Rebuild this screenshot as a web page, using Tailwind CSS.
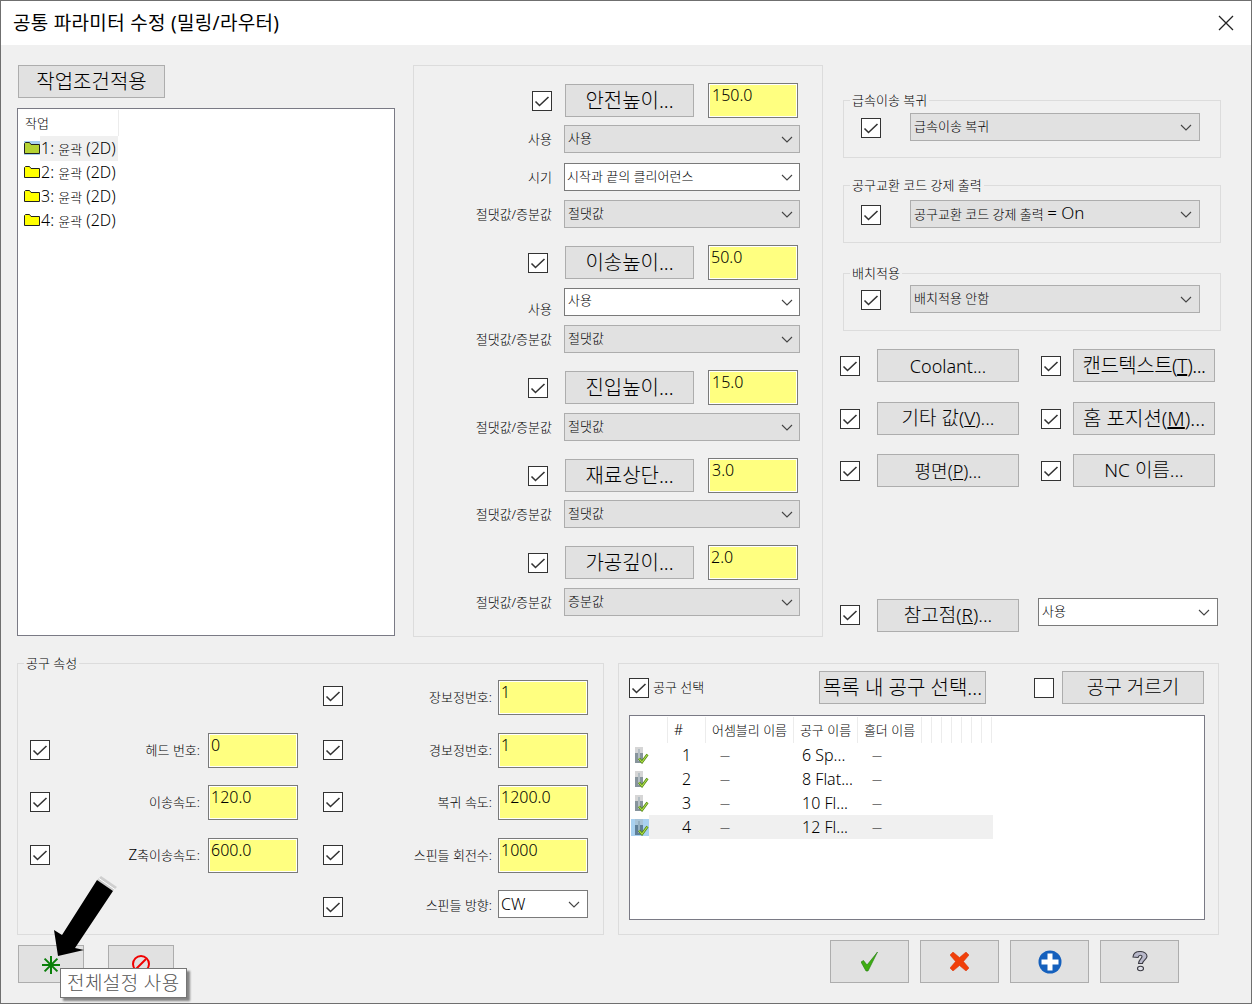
<!DOCTYPE html>
<html lang="ko">
<head>
    <meta charset="UTF-8">
    <title>공통 파라미터 수정</title>
    <script src="https://cdn.jsdelivr.net/npm/@tailwindcss/browser@4"></script>
</head>
<body class="bg-[#f0f0f0]">
<div class="relative w-[1252px] h-[1004px] overflow-hidden border border-[#6f6f6f] bg-[#f0f0f0] text-black font-light font-['Noto_Sans','Noto_Sans_CJK_KR',sans-serif]">

    <!-- Title bar -->
    <div class="flex items-center justify-between h-[44px] bg-white pl-[12px] pr-[17px]">
        <span class="text-[19px] tracking-[0.3px] font-normal">공통 파라미터 수정 (밀링/라우터)</span>
        <svg class="w-[16px] h-[16px]" viewBox="0 0 16 16" fill="none" stroke="#222" stroke-width="1.3"><path d="M1 1l14 14M15 1L1 15"/></svg>
    </div>

    <!-- Top area -->
    <div class="flex mt-[20px] h-[572px]">
        <!-- Left column -->
        <div class="ml-[16px] w-[378px]">
            <button class="ml-[1px] w-[147px] h-[33px] bg-[#e1e1e1] border border-[#adadad] text-[20px] leading-none">작업조건적용</button>
            <div class="mt-[10px] h-[528px] bg-white border border-[#7a7a85] pl-[1px] pt-[1px]">
                <div class="w-[100px] h-[26px] border-r border-[#ececec] pl-[6px] text-[13px] leading-[27px]">작업</div>
                <div class="flex items-center h-[24px] pl-[5px]">
                    <svg class="w-[16px] h-[14px] bg-[#a9d1f0]" viewBox="0 0 16 14"><path d="M.5 12.500v-10l1-1h4l1.500 2h8.500v9z" fill="#b5d334" stroke="#222"/></svg>
                    <span class="bg-[#f0f0f0] pl-[1px] text-[16px] leading-[24px] w-[78px]">1: <span class="text-[13px]">윤곽</span> (2D)</span>
                </div>
                <div class="flex items-center h-[24px] pl-[5px]">
                    <svg class="w-[16px] h-[14px]" viewBox="0 0 16 14"><path d="M.5 12.500v-10l1-1h4l1.500 2h8.500v9z" fill="#ffff00" stroke="#222"/></svg>
                    <span class="pl-[1px] text-[16px] leading-[24px]">2: <span class="text-[13px]">윤곽</span> (2D)</span>
                </div>
                <div class="flex items-center h-[24px] pl-[5px]">
                    <svg class="w-[16px] h-[14px]" viewBox="0 0 16 14"><path d="M.5 12.500v-10l1-1h4l1.500 2h8.500v9z" fill="#ffff00" stroke="#222"/></svg>
                    <span class="pl-[1px] text-[16px] leading-[24px]">3: <span class="text-[13px]">윤곽</span> (2D)</span>
                </div>
                <div class="flex items-center h-[24px] pl-[5px]">
                    <svg class="w-[16px] h-[14px]" viewBox="0 0 16 14"><path d="M.5 12.500v-10l1-1h4l1.500 2h8.500v9z" fill="#ffff00" stroke="#222"/></svg>
                    <span class="pl-[1px] text-[16px] leading-[24px]">4: <span class="text-[13px]">윤곽</span> (2D)</span>
                </div>
            </div>
        </div>

        <!-- Middle group -->
        <div class="ml-[18px] w-[410px] h-[572px] border border-[#dcdcdc] pt-[17px]">
            <div class="flex items-center h-[35px]">
                <div class="flex justify-end w-[138px]"><div class="w-[20px] h-[20px] bg-white border border-[#333]"><svg class="w-[18px] h-[18px]" viewBox="0 0 18 18" fill="none" stroke="#333" stroke-width="1.600"><path d="M2.500 9.500l4 4L15.500 5"/></svg></div></div>
                <button class="ml-[13px] w-[129px] h-[33px] bg-[#e1e1e1] border border-[#adadad] text-[20px] leading-none">안전높이...</button>
                <div class="ml-[14px] w-[90px] h-[35px] bg-[#ffff80] border border-[#7a7a7a] outline outline-white -outline-offset-2 pl-[3px] text-[16px] leading-[22px]">150.0</div>
            </div>
            <div class="flex items-center mt-[7px]">
                <div class="w-[138px] text-right text-[13px] pt-[2px]">사용</div>
                <div class="flex items-center justify-between ml-[12px] w-[236px] h-[28px] bg-[#e1e1e1] border border-[#adadad] pl-[3px] pr-[6px] text-[13px]">사용<svg class="w-[12px] h-[7px]" viewBox="0 0 12 7" fill="none" stroke="#444" stroke-width="1.100"><path d="M1 1l5 5 5-5"/></svg></div>
            </div>
            <div class="flex items-center mt-[10px]">
                <div class="w-[138px] text-right text-[13px] pt-[2px]">시기</div>
                <div class="flex items-center justify-between ml-[12px] w-[236px] h-[28px] bg-white border border-[#7a7a7a] pl-[2px] pr-[6px] text-[13px]">시작과 끝의 클리어런스<svg class="w-[12px] h-[7px]" viewBox="0 0 12 7" fill="none" stroke="#444" stroke-width="1.100"><path d="M1 1l5 5 5-5"/></svg></div>
            </div>
            <div class="flex items-center mt-[9px]">
                <div class="w-[138px] text-right text-[13px] pt-[2px]">절댓값/증분값</div>
                <div class="flex items-center justify-between ml-[12px] w-[236px] h-[28px] bg-[#e1e1e1] border border-[#adadad] pl-[3px] pr-[6px] text-[13px]">절댓값<svg class="w-[12px] h-[7px]" viewBox="0 0 12 7" fill="none" stroke="#444" stroke-width="1.100"><path d="M1 1l5 5 5-5"/></svg></div>
            </div>

            <div class="flex items-center h-[35px] mt-[17px]">
                <div class="flex justify-end w-[134px] mr-[4px]"><div class="w-[20px] h-[20px] bg-white border border-[#333]"><svg class="w-[18px] h-[18px]" viewBox="0 0 18 18" fill="none" stroke="#333" stroke-width="1.600"><path d="M2.500 9.500l4 4L15.500 5"/></svg></div></div>
                <button class="ml-[13px] w-[129px] h-[33px] bg-[#e1e1e1] border border-[#adadad] text-[20px] leading-none">이송높이...</button>
                <div class="ml-[14px] w-[90px] h-[35px] bg-[#ffff80] border border-[#7a7a7a] outline outline-white -outline-offset-2 pl-[2px] text-[16px] leading-[22px]">50.0</div>
            </div>
            <div class="flex items-center mt-[8px]">
                <div class="w-[138px] text-right text-[13px] translate-y-[8px]">사용</div>
                <div class="flex items-center justify-between ml-[12px] w-[236px] h-[28px] bg-white border border-[#7a7a7a] pl-[3px] pr-[6px] pb-[3px] text-[13px]">사용<svg class="w-[12px] h-[7px] mt-[3px]" viewBox="0 0 12 7" fill="none" stroke="#444" stroke-width="1.100"><path d="M1 1l5 5 5-5"/></svg></div>
            </div>
            <div class="flex items-center mt-[9px]">
                <div class="w-[138px] text-right text-[13px] pt-[2px]">절댓값/증분값</div>
                <div class="flex items-center justify-between ml-[12px] w-[236px] h-[28px] bg-[#e1e1e1] border border-[#adadad] pl-[3px] pr-[6px] text-[13px]">절댓값<svg class="w-[12px] h-[7px]" viewBox="0 0 12 7" fill="none" stroke="#444" stroke-width="1.100"><path d="M1 1l5 5 5-5"/></svg></div>
            </div>

            <div class="flex items-center h-[35px] mt-[17px]">
                <div class="flex justify-end w-[134px] mr-[4px]"><div class="w-[20px] h-[20px] bg-white border border-[#333]"><svg class="w-[18px] h-[18px]" viewBox="0 0 18 18" fill="none" stroke="#333" stroke-width="1.600"><path d="M2.500 9.500l4 4L15.500 5"/></svg></div></div>
                <button class="ml-[13px] w-[129px] h-[33px] bg-[#e1e1e1] border border-[#adadad] text-[20px] leading-none">진입높이...</button>
                <div class="ml-[14px] w-[90px] h-[35px] bg-[#ffff80] border border-[#7a7a7a] outline outline-white -outline-offset-2 pl-[3px] text-[16px] leading-[22px]">15.0</div>
            </div>
            <div class="flex items-center mt-[8px]">
                <div class="w-[138px] text-right text-[13px] pt-[2px]">절댓값/증분값</div>
                <div class="flex items-center justify-between ml-[12px] w-[236px] h-[28px] bg-[#e1e1e1] border border-[#adadad] pl-[3px] pr-[6px] text-[13px]">절댓값<svg class="w-[12px] h-[7px]" viewBox="0 0 12 7" fill="none" stroke="#444" stroke-width="1.100"><path d="M1 1l5 5 5-5"/></svg></div>
            </div>

            <div class="flex items-center h-[35px] mt-[17px]">
                <div class="flex justify-end w-[134px] mr-[4px]"><div class="w-[20px] h-[20px] bg-white border border-[#333]"><svg class="w-[18px] h-[18px]" viewBox="0 0 18 18" fill="none" stroke="#333" stroke-width="1.600"><path d="M2.500 9.500l4 4L15.500 5"/></svg></div></div>
                <button class="ml-[13px] w-[129px] h-[33px] bg-[#e1e1e1] border border-[#adadad] text-[20px] leading-none">재료상단...</button>
                <div class="ml-[14px] w-[90px] h-[35px] bg-[#ffff80] border border-[#7a7a7a] outline outline-white -outline-offset-2 pl-[3px] text-[16px] leading-[22px]">3.0</div>
            </div>
            <div class="flex items-center mt-[7px]">
                <div class="w-[138px] text-right text-[13px] pt-[2px]">절댓값/증분값</div>
                <div class="flex items-center justify-between ml-[12px] w-[236px] h-[28px] bg-[#e1e1e1] border border-[#adadad] pl-[3px] pr-[6px] text-[13px]">절댓값<svg class="w-[12px] h-[7px]" viewBox="0 0 12 7" fill="none" stroke="#444" stroke-width="1.100"><path d="M1 1l5 5 5-5"/></svg></div>
            </div>

            <div class="flex items-center h-[35px] mt-[17px]">
                <div class="flex justify-end w-[134px] mr-[4px]"><div class="w-[20px] h-[20px] bg-white border border-[#333]"><svg class="w-[18px] h-[18px]" viewBox="0 0 18 18" fill="none" stroke="#333" stroke-width="1.600"><path d="M2.500 9.500l4 4L15.500 5"/></svg></div></div>
                <button class="ml-[13px] w-[129px] h-[33px] bg-[#e1e1e1] border border-[#adadad] text-[20px] leading-none">가공깊이...</button>
                <div class="ml-[14px] w-[90px] h-[35px] bg-[#ffff80] border border-[#7a7a7a] outline outline-white -outline-offset-2 pl-[2px] text-[16px] leading-[22px]">2.0</div>
            </div>
            <div class="flex items-center mt-[8px]">
                <div class="w-[138px] text-right text-[13px] pt-[2px]">절댓값/증분값</div>
                <div class="flex items-center justify-between ml-[12px] w-[236px] h-[28px] bg-[#e1e1e1] border border-[#adadad] pl-[3px] pr-[6px] text-[13px]">증분값<svg class="w-[12px] h-[7px]" viewBox="0 0 12 7" fill="none" stroke="#444" stroke-width="1.100"><path d="M1 1l5 5 5-5"/></svg></div>
            </div>
        </div>

        <!-- Right column -->
        <div class="ml-[17px] w-[395px]">
            <div class="relative ml-[3px] mt-[35px] w-[378px] h-[58px] border border-[#dcdcdc] flex items-start pl-[17px] pt-[12px]">
                <span class="absolute -top-[9px] left-[6px] bg-[#f0f0f0] px-[2px] text-[13px] leading-[16px]">급속이송 복귀</span>
                <div class="mt-[5px] w-[20px] h-[20px] bg-white border border-[#333]"><svg class="w-[18px] h-[18px]" viewBox="0 0 18 18" fill="none" stroke="#333" stroke-width="1.600"><path d="M2.500 9.500l4 4L15.500 5"/></svg></div>
                <div class="flex items-center justify-between ml-[29px] w-[290px] h-[28px] bg-[#e1e1e1] border border-[#adadad] pl-[3px] pr-[7px] text-[13px]">급속이송 복귀<svg class="w-[12px] h-[7px]" viewBox="0 0 12 7" fill="none" stroke="#444" stroke-width="1.100"><path d="M1 1l5 5 5-5"/></svg></div>
            </div>
            <div class="relative ml-[3px] mt-[27px] w-[378px] h-[58px] border border-[#dcdcdc] flex items-start pl-[17px] pt-[14px]">
                <span class="absolute -top-[9px] left-[6px] bg-[#f0f0f0] px-[2px] text-[13px] leading-[16px]">공구교환 코드 강제 출력</span>
                <div class="mt-[5px] w-[20px] h-[20px] bg-white border border-[#333]"><svg class="w-[18px] h-[18px]" viewBox="0 0 18 18" fill="none" stroke="#333" stroke-width="1.600"><path d="M2.500 9.500l4 4L15.500 5"/></svg></div>
                <div class="flex items-center justify-between ml-[29px] w-[290px] h-[28px] bg-[#e1e1e1] border border-[#adadad] pl-[3px] pr-[7px] text-[13px]"><span>공구교환 코드 강제 출력 <span class="text-[17px] leading-none">= On</span></span><svg class="w-[12px] h-[7px]" viewBox="0 0 12 7" fill="none" stroke="#444" stroke-width="1.100"><path d="M1 1l5 5 5-5"/></svg></div>
            </div>
            <div class="relative ml-[3px] mt-[30px] w-[378px] h-[58px] border border-[#dcdcdc] flex items-start pl-[17px] pt-[11px]">
                <span class="absolute -top-[9px] left-[6px] bg-[#f0f0f0] px-[2px] text-[13px] leading-[16px]">배치적용</span>
                <div class="mt-[5px] w-[20px] h-[20px] bg-white border border-[#333]"><svg class="w-[18px] h-[18px]" viewBox="0 0 18 18" fill="none" stroke="#333" stroke-width="1.600"><path d="M2.500 9.500l4 4L15.500 5"/></svg></div>
                <div class="flex items-center justify-between ml-[29px] w-[290px] h-[28px] bg-[#e1e1e1] border border-[#adadad] pl-[3px] pr-[7px] text-[13px]">배치적용 안함<svg class="w-[12px] h-[7px]" viewBox="0 0 12 7" fill="none" stroke="#444" stroke-width="1.100"><path d="M1 1l5 5 5-5"/></svg></div>
            </div>

            <div class="flex items-center h-[33px] mt-[18px]">
                <div class="w-[20px] h-[20px] bg-white border border-[#333]"><svg class="w-[18px] h-[18px]" viewBox="0 0 18 18" fill="none" stroke="#333" stroke-width="1.600"><path d="M2.500 9.500l4 4L15.500 5"/></svg></div>
                <button class="ml-[17px] w-[142px] h-[33px] bg-[#e1e1e1] border border-[#adadad] text-[18px] leading-none">Coolant...</button>
                <div class="ml-[22px] w-[20px] h-[20px] bg-white border border-[#333]"><svg class="w-[18px] h-[18px]" viewBox="0 0 18 18" fill="none" stroke="#333" stroke-width="1.600"><path d="M2.500 9.500l4 4L15.500 5"/></svg></div>
                <button class="ml-[12px] w-[142px] h-[33px] bg-[#e1e1e1] border border-[#adadad] text-[20px] leading-none tracking-[-0.5px] whitespace-nowrap">캔드텍스트(<u>T</u>)...</button>
            </div>
            <div class="flex items-center h-[33px] mt-[20px]">
                <div class="w-[20px] h-[20px] bg-white border border-[#333]"><svg class="w-[18px] h-[18px]" viewBox="0 0 18 18" fill="none" stroke="#333" stroke-width="1.600"><path d="M2.500 9.500l4 4L15.500 5"/></svg></div>
                <button class="ml-[17px] w-[142px] h-[33px] bg-[#e1e1e1] border border-[#adadad] text-[19px] leading-none">기타 값(<u>V</u>)...</button>
                <div class="ml-[22px] w-[20px] h-[20px] bg-white border border-[#333]"><svg class="w-[18px] h-[18px]" viewBox="0 0 18 18" fill="none" stroke="#333" stroke-width="1.600"><path d="M2.500 9.500l4 4L15.500 5"/></svg></div>
                <button class="ml-[12px] w-[142px] h-[33px] bg-[#e1e1e1] border border-[#adadad] text-[20px] leading-none whitespace-nowrap">홈 포지션(<u>M</u>)...</button>
            </div>
            <div class="flex items-center h-[33px] mt-[19px]">
                <div class="w-[20px] h-[20px] bg-white border border-[#333]"><svg class="w-[18px] h-[18px]" viewBox="0 0 18 18" fill="none" stroke="#333" stroke-width="1.600"><path d="M2.500 9.500l4 4L15.500 5"/></svg></div>
                <button class="ml-[17px] w-[142px] h-[33px] bg-[#e1e1e1] border border-[#adadad] text-[18px] leading-none">평면(<u>P</u>)...</button>
                <div class="ml-[22px] w-[20px] h-[20px] bg-white border border-[#333]"><svg class="w-[18px] h-[18px]" viewBox="0 0 18 18" fill="none" stroke="#333" stroke-width="1.600"><path d="M2.500 9.500l4 4L15.500 5"/></svg></div>
                <button class="ml-[12px] w-[142px] h-[33px] bg-[#e1e1e1] border border-[#adadad] text-[19px] leading-none">NC 이름...</button>
            </div>
            <div class="flex items-start h-[33px] mt-[112px]">
                <div class="mt-[6px] w-[20px] h-[20px] bg-white border border-[#333]"><svg class="w-[18px] h-[18px]" viewBox="0 0 18 18" fill="none" stroke="#333" stroke-width="1.600"><path d="M2.500 9.500l4 4L15.500 5"/></svg></div>
                <button class="ml-[17px] w-[142px] h-[33px] bg-[#e1e1e1] border border-[#adadad] text-[19px] leading-none">참고점(<u>R</u>)...</button>
                <div class="-mt-[1px] flex items-center justify-between ml-[19px] w-[180px] h-[28px] bg-white border border-[#7a7a7a] pl-[3px] pr-[7px] text-[13px]">사용<svg class="w-[12px] h-[7px]" viewBox="0 0 12 7" fill="none" stroke="#444" stroke-width="1.100"><path d="M1 1l5 5 5-5"/></svg></div>
            </div>
        </div>
    </div>

    <!-- Bottom groups -->
    <div class="flex mt-[26px] ml-[16px] gap-[14px]">
        <div class="relative w-[587px] h-[272px] border border-[#dcdcdc] pt-[16px]">
            <span class="absolute -top-[9px] left-[6px] bg-[#f0f0f0] px-[2px] text-[13px] leading-[16px]">공구 속성</span>

            <div class="flex items-center h-[35px] pl-[12px]">
                <div class="w-[293px]"></div>
                <div class="-translate-y-[2px] w-[20px] h-[20px] bg-white border border-[#333]"><svg class="w-[18px] h-[18px]" viewBox="0 0 18 18" fill="none" stroke="#333" stroke-width="1.600"><path d="M2.500 9.500l4 4L15.500 5"/></svg></div>
                <div class="w-[149px] text-right text-[13px]">장보정번호:</div>
                <div class="ml-[6px] w-[90px] h-[35px] bg-[#ffff80] border border-[#7a7a7a] outline outline-white -outline-offset-2 pl-[2px] text-[16px] leading-[22px]">1</div>
            </div>
            <div class="flex items-center h-[35px] mt-[18px] pl-[12px]">
                <div class="-translate-y-[1px] w-[20px] h-[20px] bg-white border border-[#333]"><svg class="w-[18px] h-[18px]" viewBox="0 0 18 18" fill="none" stroke="#333" stroke-width="1.600"><path d="M2.500 9.500l4 4L15.500 5"/></svg></div>
                <div class="w-[150px] text-right text-[13px]">헤드 번호:</div>
                <div class="ml-[8px] w-[90px] h-[35px] bg-[#ffff80] border border-[#7a7a7a] outline outline-white -outline-offset-2 pl-[2px] text-[16px] leading-[22px]">0</div>
                <div class="-translate-y-[1px] ml-[25px] w-[20px] h-[20px] bg-white border border-[#333]"><svg class="w-[18px] h-[18px]" viewBox="0 0 18 18" fill="none" stroke="#333" stroke-width="1.600"><path d="M2.500 9.500l4 4L15.500 5"/></svg></div>
                <div class="w-[149px] text-right text-[13px]">경보정번호:</div>
                <div class="ml-[6px] w-[90px] h-[35px] bg-[#ffff80] border border-[#7a7a7a] outline outline-white -outline-offset-2 pl-[2px] text-[16px] leading-[22px]">1</div>
            </div>
            <div class="flex items-center h-[35px] mt-[17px] pl-[12px]">
                <div class="-translate-y-[1px] w-[20px] h-[20px] bg-white border border-[#333]"><svg class="w-[18px] h-[18px]" viewBox="0 0 18 18" fill="none" stroke="#333" stroke-width="1.600"><path d="M2.500 9.500l4 4L15.500 5"/></svg></div>
                <div class="w-[150px] text-right text-[13px]">이송속도:</div>
                <div class="ml-[8px] w-[90px] h-[35px] bg-[#ffff80] border border-[#7a7a7a] outline outline-white -outline-offset-2 pl-[2px] text-[16px] leading-[22px]">120.0</div>
                <div class="-translate-y-[1px] ml-[25px] w-[20px] h-[20px] bg-white border border-[#333]"><svg class="w-[18px] h-[18px]" viewBox="0 0 18 18" fill="none" stroke="#333" stroke-width="1.600"><path d="M2.500 9.500l4 4L15.500 5"/></svg></div>
                <div class="w-[149px] text-right text-[13px]">복귀 속도:</div>
                <div class="ml-[6px] w-[90px] h-[35px] bg-[#ffff80] border border-[#7a7a7a] outline outline-white -outline-offset-2 pl-[2px] text-[16px] leading-[22px]">1200.0</div>
            </div>
            <div class="flex items-center h-[35px] mt-[18px] pl-[12px]">
                <div class="-translate-y-[1px] w-[20px] h-[20px] bg-white border border-[#333]"><svg class="w-[18px] h-[18px]" viewBox="0 0 18 18" fill="none" stroke="#333" stroke-width="1.600"><path d="M2.500 9.500l4 4L15.500 5"/></svg></div>
                <div class="w-[150px] text-right text-[13px]"><span class="text-[15px] leading-none">Z</span>축이송속도:</div>
                <div class="ml-[8px] w-[90px] h-[35px] bg-[#ffff80] border border-[#7a7a7a] outline outline-white -outline-offset-2 pl-[2px] text-[16px] leading-[22px]">600.0</div>
                <div class="-translate-y-[1px] ml-[25px] w-[20px] h-[20px] bg-white border border-[#333]"><svg class="w-[18px] h-[18px]" viewBox="0 0 18 18" fill="none" stroke="#333" stroke-width="1.600"><path d="M2.500 9.500l4 4L15.500 5"/></svg></div>
                <div class="w-[149px] text-right text-[13px]">스핀들 회전수:</div>
                <div class="ml-[6px] w-[90px] h-[35px] bg-[#ffff80] border border-[#7a7a7a] outline outline-white -outline-offset-2 pl-[2px] text-[16px] leading-[22px]">1000</div>
            </div>
            <div class="flex items-center h-[28px] mt-[17px] pl-[12px]">
                <div class="w-[293px]"></div>
                <div class="translate-y-[3px] w-[20px] h-[20px] bg-white border border-[#333]"><svg class="w-[18px] h-[18px]" viewBox="0 0 18 18" fill="none" stroke="#333" stroke-width="1.600"><path d="M2.500 9.500l4 4L15.500 5"/></svg></div>
                <div class="w-[149px] text-right text-[13px] pt-[4px]">스핀들 방향:</div>
                <div class="flex items-center justify-between ml-[6px] w-[90px] h-[28px] bg-white border border-[#7a7a7a] pl-[2px] pr-[7px] text-[16px]">CW<svg class="w-[12px] h-[7px]" viewBox="0 0 12 7" fill="none" stroke="#444" stroke-width="1.100"><path d="M1 1l5 5 5-5"/></svg></div>
            </div>
        </div>

        <div class="w-[601px] h-[272px] border border-[#dcdcdc] pl-[10px] pt-[7px]">
            <div class="flex items-center h-[33px]">
                <div class="w-[20px] h-[20px] bg-white border border-[#333]"><svg class="w-[18px] h-[18px]" viewBox="0 0 18 18" fill="none" stroke="#333" stroke-width="1.600"><path d="M2.500 9.500l4 4L15.500 5"/></svg></div>
                <span class="ml-[4px] w-[166px] text-[13px]">공구 선택</span>
                <button class="w-[167px] h-[33px] bg-[#e1e1e1] border border-[#adadad] text-[20px] leading-none whitespace-nowrap">목록 내 공구 선택...</button>
                <div class="ml-[48px] w-[20px] h-[20px] bg-white border border-[#333]"></div>
                <button class="ml-[8px] w-[142px] h-[33px] bg-[#e1e1e1] border border-[#adadad] text-[19px] leading-none">공구 거르기</button>
            </div>
            <div class="mt-[11px] w-[576px] h-[205px] bg-white border border-[#7a7a85] pt-[1px]">
                <div class="flex h-[26px] text-[13px] leading-[26px] whitespace-nowrap">
                    <div class="w-[38px] border-r border-[#ececec]"></div>
                    <div class="w-[38px] border-r border-[#ececec] pl-[6px] text-[14px]">#</div>
                    <div class="w-[88px] border-r border-[#ececec] text-center">어셈블리 이름</div>
                    <div class="w-[64px] border-r border-[#ececec] text-center">공구 이름</div>
                    <div class="w-[64px] border-r border-[#ececec] text-center">홀더 이름</div>
                    <div class="w-[10px] border-r border-[#ececec]"></div>
                    <div class="w-[10px] border-r border-[#ececec]"></div>
                    <div class="w-[10px] border-r border-[#ececec]"></div>
                    <div class="w-[10px] border-r border-[#ececec]"></div>
                    <div class="w-[10px] border-r border-[#ececec]"></div>
                    <div class="w-[10px] border-r border-[#ececec]"></div>
                    <div class="w-[10px] border-r border-[#ececec]"></div>
                </div>
                <div class="flex items-center h-[24px] text-[16px]">
                    <svg class="ml-[4px] w-[15px] h-[17px]" viewBox="0 0 15 17"><rect x="1" y="0" width="8" height="6" fill="#d6d6d6"/><rect x="1" y="6" width="8" height="10" fill="#87949c"/><rect x="4" y="2" width="2" height="12" fill="#b4bec4"/><path d="M5 11.500l3 3.500 5.500-7.500" fill="none" stroke="#4e8410" stroke-width="2.600"/><path d="M5 11.500l3 3.500 5.500-7.500" fill="none" stroke="#b2e04e" stroke-width="1.100"/></svg>
                    <div class="ml-[33px] w-[32px]">1</div>
                    <div class="w-[88px] pl-[6px] text-[10px]">—</div>
                    <div class="w-[64px] whitespace-nowrap">6 Sp...</div>
                    <div class="pl-[6px] text-[10px]">—</div>
                </div>
                <div class="flex items-center h-[24px] text-[16px]">
                    <svg class="ml-[4px] w-[15px] h-[17px]" viewBox="0 0 15 17"><rect x="1" y="0" width="8" height="6" fill="#d6d6d6"/><rect x="1" y="6" width="8" height="10" fill="#87949c"/><rect x="4" y="2" width="2" height="12" fill="#b4bec4"/><path d="M5 11.500l3 3.500 5.500-7.500" fill="none" stroke="#4e8410" stroke-width="2.600"/><path d="M5 11.500l3 3.500 5.500-7.500" fill="none" stroke="#b2e04e" stroke-width="1.100"/></svg>
                    <div class="ml-[33px] w-[32px]">2</div>
                    <div class="w-[88px] pl-[6px] text-[10px]">—</div>
                    <div class="w-[64px] whitespace-nowrap">8 Flat...</div>
                    <div class="pl-[6px] text-[10px]">—</div>
                </div>
                <div class="flex items-center h-[24px] text-[16px]">
                    <svg class="ml-[4px] w-[15px] h-[17px]" viewBox="0 0 15 17"><rect x="1" y="0" width="8" height="6" fill="#d6d6d6"/><rect x="1" y="6" width="8" height="10" fill="#87949c"/><rect x="4" y="2" width="2" height="12" fill="#b4bec4"/><path d="M5 11.500l3 3.500 5.500-7.500" fill="none" stroke="#4e8410" stroke-width="2.600"/><path d="M5 11.500l3 3.500 5.500-7.500" fill="none" stroke="#b2e04e" stroke-width="1.100"/></svg>
                    <div class="ml-[33px] w-[32px]">3</div>
                    <div class="w-[88px] pl-[6px] text-[10px]">—</div>
                    <div class="w-[64px] whitespace-nowrap">10 Fl...</div>
                    <div class="pl-[6px] text-[10px]">—</div>
                </div>
                <div class="flex items-center h-[24px] text-[16px]">
                    <svg class="ml-[1px] w-[18px] h-[17px] bg-[#a9d1f0]" viewBox="0 0 18 17"><rect x="4" y="0" width="8" height="6" fill="#a8c4d8"/><rect x="4" y="6" width="8" height="10" fill="#5f7f98"/><rect x="7" y="2" width="2" height="12" fill="#94aec0"/><path d="M8 11.500l3 3.500 5.500-7.500" fill="none" stroke="#4e8410" stroke-width="2.600"/><path d="M8 11.500l3 3.500 5.500-7.500" fill="none" stroke="#b2e04e" stroke-width="1.100"/></svg>
                    <div class="flex items-center w-[344px] h-[24px] bg-[#f0f0f0]">
                        <div class="ml-[33px] w-[32px]">4</div>
                        <div class="w-[88px] pl-[6px] text-[10px]">—</div>
                        <div class="w-[64px] whitespace-nowrap">12 Fl...</div>
                        <div class="pl-[6px] text-[10px]">—</div>
                    </div>
                </div>
            </div>
        </div>
    </div>

    <!-- Bottom buttons -->
    <div class="flex items-start">
        <button class="flex items-center justify-center ml-[17px] mt-[10px] w-[66px] h-[38px] bg-[#e1e1e1] border border-[#adadad]">
            <svg class="w-[18px] h-[18px] mt-[2px]" viewBox="0 0 18 18" fill="none" stroke="#0a7f0a" stroke-width="2"><path d="M9 0v18M0 9h18M2.600 2.600l12.800 12.800M15.400 2.600L2.600 15.400"/></svg>
        </button>
        <button class="flex justify-center ml-[24px] mt-[10px] w-[66px] h-[38px] bg-[#e1e1e1] border border-[#adadad]">
            <svg class="w-[18px] h-[18px] mt-[9px]" viewBox="0 0 18 18" fill="none" stroke="#f00000" stroke-width="2"><circle cx="9" cy="9" r="8"/><path d="M4 14L14 4"/></svg>
        </button>
        <button class="flex items-center justify-center ml-[656px] mt-[5px] w-[79px] h-[43px] bg-[#e1e1e1] border border-[#adadad]">
            <svg class="w-[18px] h-[20px]" viewBox="0 0 18 20"><path d="M0 10l2.500-1.500L6 13 16.500 0 7 19H5z" fill="#3fae12" stroke="#1f7a0c" stroke-width=".6"/></svg>
        </button>
        <button class="flex items-center justify-center ml-[11px] mt-[5px] w-[79px] h-[43px] bg-[#e1e1e1] border border-[#adadad]">
            <svg class="w-[19px] h-[19px]" viewBox="0 0 19 19"><path d="M3 0l6.500 5.500L16 0l3 3-5.500 6.500L19 16l-3 3-6.500-5.500L3 19l-3-3 5.500-6.500L0 3z" fill="#f0400a" stroke="#d83208" stroke-width=".5"/></svg>
        </button>
        <button class="flex items-center justify-center ml-[11px] mt-[5px] w-[79px] h-[43px] bg-[#e1e1e1] border border-[#adadad]">
            <svg class="w-[24px] h-[24px]" viewBox="0 0 24 24"><circle cx="12" cy="12" r="11.500" fill="#1560bd"/><path d="M9.500 3.500h5v6h6v5h-6v6h-5v-6h-6v-5h6z" fill="#fff"/></svg>
        </button>
        <button class="flex items-center justify-center ml-[11px] mt-[5px] w-[79px] h-[43px] bg-[#e1e1e1] border border-[#adadad]">
            <svg class="w-[16px] h-[21px]" viewBox="0 0 16 21"><path d="M1 6C1.500 1.500 5 .5 8 .5c4 0 7 2 7 4.700 0 3.300-4 4-4.500 7.300H6.500C6.500 8.500 10 7.500 10 5.500 10 4 7 3.500 6 6.500z" fill="#b9b9cb" stroke="#3c3c44" stroke-width="1.100"/><ellipse cx="8.500" cy="17.500" rx="3" ry="2.200" fill="#e0e0e8" stroke="#3c3c44" stroke-width="1.100"/></svg>
        </button>
    </div>

    <!-- Annotation arrow -->
    <svg class="absolute left-[49px] top-[873px] w-[70px] h-[86px]" viewBox="0 0 70 86">
        <path d="M51 2L67 13 63 17 47 6z" fill="#cfcfcf"/>
        <path d="M49 4.500l16 11" stroke="#fff" stroke-width="1" fill="none"/>
        <path d="M47 6L63 17 25 74 34 76 8 82 4 56 12 61z" fill="#000"/>
    </svg>

    <!-- Tooltip -->
    <div class="absolute left-[59px] top-[967px] w-[127px] h-[30px] bg-white border border-[#767676] shadow-[3px_3px_2px_rgba(0,0,0,0.45)] text-[#555] text-[19px] tracking-[0.4px] leading-[28px] pl-[6px] whitespace-nowrap">전체설정 사용</div>
</div>
</body>
</html>
